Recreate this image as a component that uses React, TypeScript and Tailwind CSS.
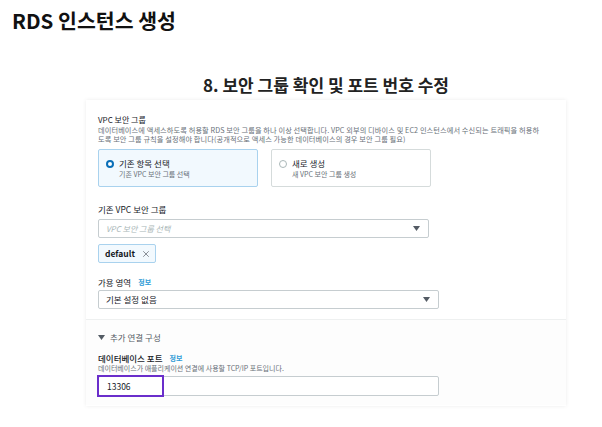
import { X } from 'lucide-react'

const font = { fontFamily: '"Noto Sans CJK KR", "Noto Sans", sans-serif' }

function Caret() {
  return (
    <svg width="7" height="5" viewBox="0 0 7 5" className="shrink-0">
      <path d="M0 0 H7 L3.5 5 Z" fill="#545b64" />
    </svg>
  )
}

function Select({ text, placeholder, w }: { text: string; placeholder?: boolean; w: string }) {
  return (
    <div className={`flex h-[19px] items-center justify-between rounded-[2px] border border-[#c6cdd0] bg-white pr-[8px] pl-[7px] ${w}`}>
      <span className={placeholder ? 'text-[8px] text-[#aab7b8] italic' : 'text-[8.5px] text-[#16191f]'}>{text}</span>
      <Caret />
    </div>
  )
}

function Info() {
  return <span className="ml-[7px] text-[7px] font-bold text-[#2e9bd6]">정보</span>
}

export default function App() {
  return (
    <div className="h-[427px] w-[602px] bg-white" style={font}>
      <h1 className="pt-[7px] pl-[12px] text-[20.5px] leading-[26px] font-bold text-[#111]">RDS 인스턴스 생성</h1>

      <div className="ml-[86px] w-[480px]">
        <h2 className="mt-[41px] text-center text-[17px] leading-[22px] font-bold text-[#222]">
          8. 보안 그룹 확인 및 포트 번호 수정
        </h2>

        <div className="mt-[4px] h-[306px] bg-white shadow-[0_0_4px_rgba(0,0,0,0.08)]">
          <div className="px-[12px] pt-[15px]">
            <div className="text-[8px] leading-[10px] text-[#16191f]">VPC 보안 그룹</div>
            <div className="mt-[1px] text-[7.2px] leading-[8.5px] tracking-[0.1px] whitespace-nowrap text-[#687078]">
              <div>데이터베이스에 액세스하도록 허용할 RDS 보안 그룹을 하나 이상 선택합니다. VPC 외부의 디바이스 및 EC2 인스턴스에서 수신되는 트래픽을 허용하</div>
              <div>도록 보안 그룹 규칙을 설정해야 합니다(공개적으로 액세스 가능한 데이터베이스의 경우 보안 그룹 필요)</div>
            </div>

            <div className="mt-[6px] flex gap-[13px]">
              <div className="flex h-[38px] w-[160px] items-start gap-[5px] rounded-[2px] border border-[#a9d2ee] bg-[#f2f9fe] pt-[8px] pl-[7px]">
                <span className="mt-[2px] block h-[8px] w-[8px] rounded-full border-[2.5px] border-[#0a6fb8] bg-white" />
                <div>
                  <div className="text-[8.5px] leading-[11px] text-[#16191f]">기존 항목 선택</div>
                  <div className="text-[7px] leading-[10px] text-[#687078]">기존 VPC 보안 그룹 선택</div>
                </div>
              </div>
              <div className="flex h-[38px] w-[160px] items-start gap-[5px] rounded-[2px] border border-[#d5dbdb] bg-white pt-[8px] pl-[7px]">
                <span className="mt-[2px] block h-[8px] w-[8px] rounded-full border border-[#aab7b8] bg-white" />
                <div>
                  <div className="text-[8.5px] leading-[11px] text-[#16191f]">새로 생성</div>
                  <div className="text-[7px] leading-[10px] text-[#687078]">새 VPC 보안 그룹 생성</div>
                </div>
              </div>
            </div>

            <div className="mt-[17px] text-[8.5px] leading-[11px] text-[#16191f]">기존 VPC 보안 그룹</div>
            <div className="mt-[4px]">
              <Select text="VPC 보안 그룹 선택" placeholder w="w-[331px]" />
            </div>
            <div className="mt-[6px] flex h-[19px] w-[58px] items-center gap-[6px] rounded-[2px] border border-[#a9d2ee] bg-[#f2f9fe] pl-[6px]">
              <span className="text-[8.5px] font-bold text-[#16191f]">default</span>
              <X size={10} strokeWidth={1.6} color="#545b64" />
            </div>

            <div className="mt-[14px] flex items-center text-[8.5px] leading-[11px] text-[#16191f]">
              가용 영역 <Info />
            </div>
            <div className="mt-[2px]">
              <Select text="기본 설정 없음" w="w-[341px]" />
            </div>
          </div>

          <div className="mt-[10px] border-t border-[#eef0f0] bg-[#fdfdfd] px-[12px] pt-[12px] pb-[9px]">
            <div className="flex items-center gap-[5px] text-[8.5px] leading-[11px] text-[#545b64]">
              <Caret /> 추가 연결 구성
            </div>
            <div className="mt-[10px] flex items-center text-[8.5px] leading-[11px] font-medium text-[#16191f]">
              데이터베이스 포트 <Info />
            </div>
            <div className="text-[7px] leading-[9px] text-[#687078]">
              데이터베이스가 애플리케이션 연결에 사용할 TCP/IP 포트입니다.
            </div>
            <div className="relative mt-[3px] flex h-[20px] w-[341px] items-center rounded-[2px] border border-[#c6cdd0] bg-white pl-[8px]">
              <span className="text-[8.5px] text-[#16191f]">13306</span>
              <div className="absolute top-[-2px] left-[-2px] h-[22px] w-[67px] border-2 border-[#6a2ecb]" />
            </div>
          </div>
        </div>
      </div>
    </div>
  )
}
